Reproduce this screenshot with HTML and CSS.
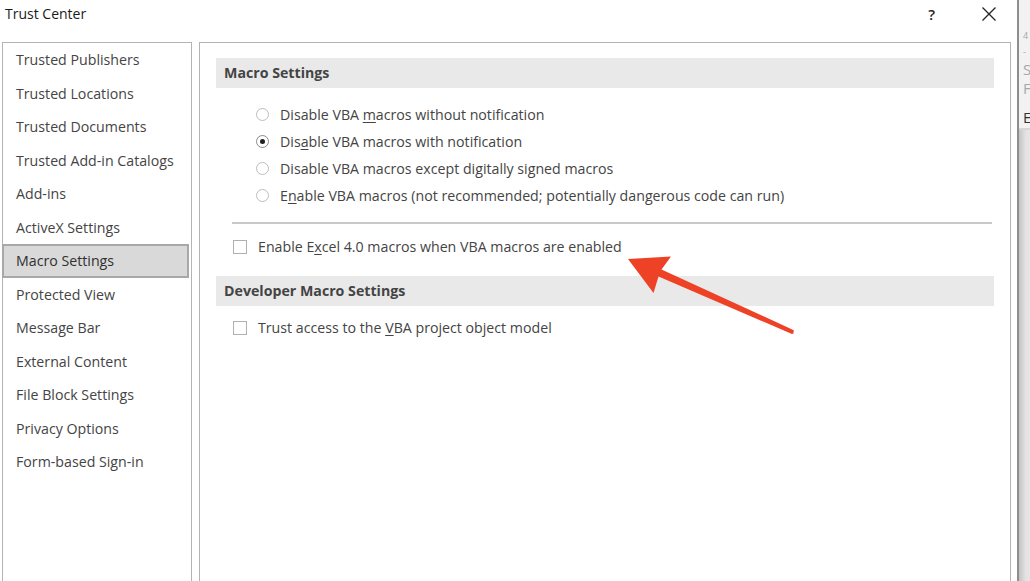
FILE: index.html
```html
<!DOCTYPE html>
<html>
<head>
<meta charset="utf-8">
<link rel="stylesheet" href="styles.css">
</head>
<body>
<div class="screen">
  <div class="dialog">
    <div class="titlebar">
      <span class="title">Trust Center</span>
      <div class="title-actions">
        <span class="help">?</span>
        <svg class="close" width="16" height="16" viewBox="0 0 16 16"><path d="M1.5 1.5 L14.5 14.5 M14.5 1.5 L1.5 14.5" stroke="#222" stroke-width="1.3" fill="none"/></svg>
      </div>
    </div>
    <div class="content">
      <nav class="nav">
        <div class="nav-item">Trusted Publishers</div>
        <div class="nav-item">Trusted Locations</div>
        <div class="nav-item">Trusted Documents</div>
        <div class="nav-item">Trusted Add-in Catalogs</div>
        <div class="nav-item">Add-ins</div>
        <div class="nav-item">ActiveX Settings</div>
        <div class="nav-item selected">Macro Settings</div>
        <div class="nav-item">Protected View</div>
        <div class="nav-item">Message Bar</div>
        <div class="nav-item">External Content</div>
        <div class="nav-item">File Block Settings</div>
        <div class="nav-item">Privacy Options</div>
        <div class="nav-item">Form-based Sign-in</div>
      </nav>
      <main class="panel">
        <div class="band">Macro Settings</div>
        <div class="radios">
          <div class="opt"><span class="radio"></span><span>Disable VBA <u>m</u>acros without notification</span></div>
          <div class="opt"><span class="radio on"></span><span>Dis<u>a</u>ble VBA macros with notification</span></div>
          <div class="opt"><span class="radio"></span><span>Disable VBA macros except di<u>g</u>itally signed macros</span></div>
          <div class="opt"><span class="radio"></span><span>E<u>n</u>able VBA macros (not recommended; potentially dangerous code can run)</span></div>
        </div>
        <div class="sep"></div>
        <div class="check-row first"><span class="check"></span><span>Enable E<u>x</u>cel 4.0 macros when VBA macros are enabled</span></div>
        <div class="band band2">Developer Macro Settings</div>
        <div class="check-row last"><span class="check"></span><span>Trust access to the <u>V</u>BA project object model</span></div>
      </main>
    </div>
  </div>
  <div class="backwin">
    <div class="bw-top">
      <span class="bw-l small">4</span>
      <span class="bw-l small">-</span>
      <span class="bw-l">S</span>
      <span class="bw-l">F</span>
      <span class="bw-l dark">E</span>
    </div>
    <div class="bw-bottom"></div>
  </div>
  <svg class="arrow" width="1030" height="581" viewBox="0 0 1030 581">
    <polygon fill="#ee4226" points="628,259 671,256.5 661.5,269.5 793.8,330.2 793.4,333.6 792,334 658.5,276.5 653.5,293"/>
  </svg>
</div>
</body>
</html>
```
FILE: styles.css
```css
html, body {
  margin: 0;
  padding: 0;
  background: #ffffff;
}
body {
  font-family: "Segoe UI", "Open Sans", "Noto Sans", sans-serif;
  font-size: 14.2px;
  color: #444444;
}
.screen {
  position: relative;
  width: 1030px;
  height: 581px;
  overflow: hidden;
  display: flex;
}
.dialog {
  width: 1017px;
  flex-shrink: 0;
  display: flex;
  flex-direction: column;
  background: #ffffff;
}
.titlebar {
  height: 42px;
  flex-shrink: 0;
  display: flex;
  align-items: flex-start;
  justify-content: space-between;
}
.title {
  margin: 4px 0 0 5px;
  font-size: 14px;
  color: #1a1a1a;
}
.title-actions {
  display: flex;
  align-items: center;
  gap: 46px;
  margin: 5px 20px 0 0;
}
.help {
  font-size: 15px;
  font-weight: 600;
  color: #222;
  line-height: 18px;
}
.close {
  display: block;
}
.content {
  display: flex;
  flex-shrink: 0;
  gap: 7px;
  padding-left: 2px;
  height: 560px;
}
.nav {
  width: 190px;
  border: 1px solid #b4b4b4;
  border-bottom: none;
  padding-top: 0;
  height: 560px;
  box-sizing: border-box;
}
.nav-item {
  height: 33.5px;
  line-height: 33px;
  padding-left: 13px;
  margin-right: 2px;
  box-sizing: border-box;
  white-space: nowrap;
}
.nav-item.selected {
  background: #d9d9d9;
  border: 2px solid #a8a8a8;
  padding-left: 12px;
  line-height: 29px;
  margin-left: -1px;
  color: #303030;
}
.panel {
  width: 812px;
  border: 1px solid #b4b4b4;
  border-bottom: none;
  box-sizing: border-box;
  padding: 15px 16px 0 16px;
  height: 560px;
}
.band {
  height: 30px;
  line-height: 29px;
  background: #e9e9e9;
  padding-left: 8px;
  font-weight: 700;
  color: #444;
}
.radios {
  margin-top: 12.5px;
  padding-left: 40px;
}
.opt {
  height: 27px;
  display: flex;
  align-items: center;
  gap: 11px;
  white-space: nowrap;
}
.radio {
  width: 13px;
  height: 13px;
  border: 1px solid #bdbdbd;
  border-radius: 50%;
  box-sizing: border-box;
  display: flex;
  align-items: center;
  justify-content: center;
}
.radio.on {
  border-color: #8a8a8a;
}
.radio.on::after {
  content: "";
  width: 5px;
  height: 5px;
  border-radius: 50%;
  background: #202020;
}
.sep {
  margin: 13px 0 0 16px;
  height: 2px;
  background: #c8c8c8;
  width: 760px;
}
.check-row {
  height: 30px;
  display: flex;
  align-items: center;
  gap: 11px;
  padding-left: 17px;
  white-space: nowrap;
}
.check-row.first {
  margin-top: 8px;
  margin-bottom: 14px;
}
.check-row.last {
  margin-top: 7px;
}
.check {
  width: 14px;
  height: 14px;
  border: 1px solid #b0b0b0;
  box-sizing: border-box;
  background: #fff;
}
u {
  text-decoration-thickness: 1px;
  text-underline-offset: 2px;
}
.backwin {
  flex: 1;
  border-left: 2px solid #8e8e8e;
  display: flex;
  flex-direction: column;
  background: #f2f2f2;
  overflow: hidden;
}
.bw-top {
  height: 130px;
  flex-shrink: 0;
  display: flex;
  flex-direction: column;
  padding: 28px 0 0 4px;
  box-sizing: border-box;
  border-bottom: 2px solid #d6d6d6;
  font-size: 15px;
  color: #a8a8a8;
  line-height: 19px;
}
.bw-l.small {
  font-size: 9px;
  line-height: 16px;
}
.bw-l.dark {
  color: #333;
  margin-top: 10px;
}
.bw-bottom {
  flex: 1;
  background: linear-gradient(to right, #c4c4c4, #e2e2e2 60%, #e6e6e6);
}
.arrow {
  position: absolute;
  left: 0;
  top: 0;
  pointer-events: none;
}
```
